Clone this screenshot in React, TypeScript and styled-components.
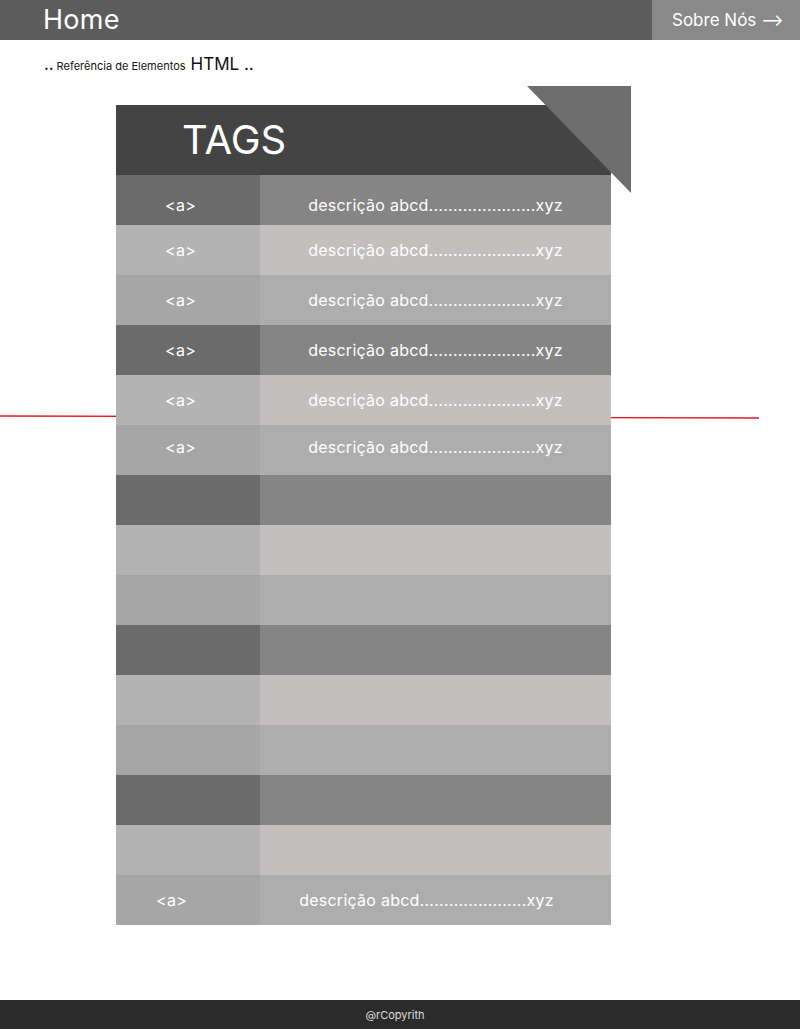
import React from 'react';
import styled, { createGlobalStyle } from 'styled-components';

type Tone = 'dark' | 'light' | 'mid';

type TagRow = {
  tag?: string;
  desc?: string;
  shift?: number;
  nudge?: number;
};

const tones: Tone[] = ['dark', 'light', 'mid'];

const leftColors: Record<Tone, string> = {
  dark: '#6b6b6b',
  light: '#b3b3b3',
  mid: '#a6a6a6',
};

const rightColors: Record<Tone, string> = {
  dark: '#858585',
  light: '#c2bfbe',
  mid: '#aeadad',
};

const DESC = 'descrição abcd......................xyz';

const rows: TagRow[] = [
  { tag: '<a>', desc: DESC, nudge: 5 },
  { tag: '<a>', desc: DESC },
  { tag: '<a>', desc: DESC },
  { tag: '<a>', desc: DESC },
  { tag: '<a>', desc: DESC },
  { tag: '<a>', desc: DESC, nudge: -3 },
  {},
  {},
  {},
  {},
  {},
  {},
  {},
  {},
  { tag: '<a>', desc: DESC, shift: -9 },
];

const App = () => {
  return (
    <Page>
      <GlobalStyle />
      <TopBar>
        <HomeLink>Home</HomeLink>
        <AboutLink>Sobre Nós ⟶</AboutLink>
      </TopBar>
      <Breadcrumb>
        <Dots>..</Dots>
        <Small>Referência de Elementos</Small>
        <Big>HTML ..</Big>
      </Breadcrumb>
      <Main>
        <RedLine width="800" height="6" viewBox="0 0 800 6">
          <line x1="0" y1="2" x2="759" y2="4" stroke="#e3191f" strokeWidth="1.3" />
        </RedLine>
        <Table>
          <Corner />
          <TableHead>TAGS</TableHead>
          {rows.map((row, i) => {
            const tone = tones[i % 3];
            return (
              <Row key={i}>
                <TagCell $tone={tone} $shift={row.shift ?? 0} $nudge={row.nudge ?? 0}>
                  {row.tag}
                </TagCell>
                <DescCell $tone={tone} $shift={row.shift ?? 0} $nudge={row.nudge ?? 0}>
                  {row.desc}
                </DescCell>
              </Row>
            );
          })}
        </Table>
      </Main>
      <Footer>@rCopyrith</Footer>
    </Page>
  );
};

const GlobalStyle = createGlobalStyle`
  html, body {
    margin: 0;
    padding: 0;
    background: #fff;
    font-family: Inter, "Noto Sans", sans-serif;
  }
`;

const Page = styled.div`
  min-height: 100vh;
  display: flex;
  flex-direction: column;
`;

const TopBar = styled.header`
  height: 40px;
  display: flex;
  align-items: stretch;
  justify-content: space-between;
  background-color: #5c5c5c;
  color: #fff;
`;

const HomeLink = styled.div`
  padding-left: 43px;
  font-size: 27px;
  line-height: 40px;
  letter-spacing: 0.3px;
`;

const AboutLink = styled.div`
  width: 148px;
  box-sizing: border-box;
  padding-left: 20px;
  background-color: #898989;
  font-size: 17px;
  line-height: 40px;
  white-space: nowrap;
`;

const Breadcrumb = styled.div`
  display: flex;
  align-items: baseline;
  gap: 3px;
  padding: 14px 0 0 44px;
  color: #111;
  height: 32px;
  box-sizing: border-box;
`;

const Dots = styled.span`
  font-size: 15px;
  font-weight: 600;
`;

const Small = styled.span`
  font-size: 11px;
  margin-right: 2px;
`;

const Big = styled.span`
  font-size: 17px;
`;

const Main = styled.main`
  position: relative;
  padding: 33px 0 0 116px;
`;

const RedLine = styled.svg`
  position: absolute;
  left: 0;
  top: 342px;
  display: block;
`;

const Table = styled.section`
  position: relative;
  width: 495px;
`;

const Corner = styled.div`
  position: absolute;
  left: 411px;
  top: -19px;
  width: 104px;
  height: 107px;
  background-color: #6e6e6e;
  clip-path: polygon(0 0, 100% 0, 100% 100%);
  z-index: 1;
`;

const TableHead = styled.div`
  height: 70px;
  background-color: #444444;
  color: #fff;
  font-size: 40px;
  line-height: 70px;
  padding-left: 66px;
`;

const Row = styled.div`
  display: grid;
  grid-template-columns: 144px 351px;
  height: 50px;
`;

type CellProps = { $tone: Tone; $shift: number; $nudge: number };

const TagCell = styled.div<CellProps>`
  background-color: ${(p) => leftColors[p.$tone]};
  color: #fff;
  font-size: 16px;
  letter-spacing: 0.3px;
  display: flex;
  align-items: center;
  padding-left: ${(p) => 49 + p.$shift}px;
  padding-top: ${(p) => Math.max(p.$nudge, 0) * 2}px;
  padding-bottom: ${(p) => Math.max(-p.$nudge, 0) * 2}px;
`;

const DescCell = styled.div<CellProps>`
  background-color: ${(p) => rightColors[p.$tone]};
  color: #fff;
  font-size: 16px;
  letter-spacing: 0.25px;
  display: flex;
  align-items: center;
  justify-content: center;
  padding-right: ${(p) => -p.$shift * 2}px;
  padding-top: ${(p) => Math.max(p.$nudge, 0) * 2}px;
  padding-bottom: ${(p) => Math.max(-p.$nudge, 0) * 2}px;
`;

const Footer = styled.footer`
  margin-top: auto;
  height: 29px;
  background-color: #2b2b2b;
  color: #dddddd;
  font-size: 11px;
  display: flex;
  align-items: center;
  justify-content: center;
  padding-right: 10px;
`;

export default App;
